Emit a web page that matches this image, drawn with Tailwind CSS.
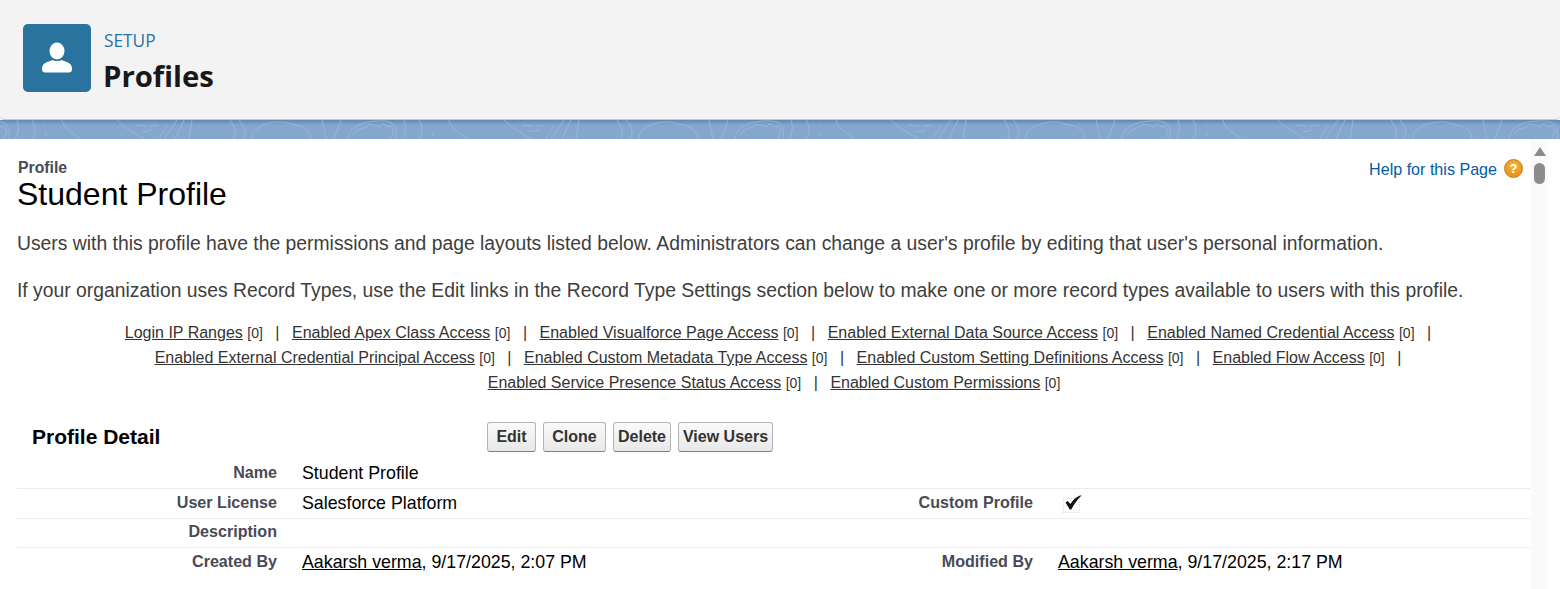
<!DOCTYPE html>
<html><head><meta charset="utf-8"><script src="https://cdn.jsdelivr.net/npm/@tailwindcss/browser@4"></script></head>
<body class="m-0 h-[589px] w-[1560px] overflow-hidden bg-white font-['Liberation_Sans',sans-serif]">
<header class="relative z-10 flex h-[120px] items-start rounded-b-[4px] border-b border-[#c9c9c9] bg-[#f3f3f3] pl-[23px] pt-[24px]">
  <div class="flex h-[68px] w-[68px] items-center justify-center rounded-[5px] bg-[#2a739e]">
    <svg width="32" height="32" viewBox="0 0 32 32" fill="#fff"><ellipse cx="16" cy="9" rx="7.5" ry="8.500"/><path d="M1 27.500c0-1 0-3 1-4.500C4 20.200 8.500 19.500 11.500 18c1.500 1.300 7.500 1.300 9 0 3 1.500 7.500 2.200 9.500 5 1 1.500 1 3.500 1 4.500 0 2-1.500 3-3 3H4c-1.500 0-3-1-3-3z"/></svg>
  </div>
  <div class="ml-[13px] font-['Open_Sans',sans-serif]">
    <div class="mt-[5px] h-[24px] text-[17.300px] leading-[24px] text-[#2574a9]">SETUP</div>
    <h1 class="mt-[4px] -ml-[1px] text-[29.300px] font-bold leading-[38px] text-[#181818]">Profiles</h1>
  </div>
</header>
<div class="relative h-[19px] overflow-hidden bg-[#85a6cf]">
  <div class="absolute inset-x-0 top-0 h-[5px] bg-gradient-to-b from-[#6486b3] to-[#85a6cf]"></div>
  <svg class="absolute inset-0" width="1560" height="19" fill="none" stroke="#a3bddc" stroke-width="1" stroke-opacity=".7">
    <defs><g id="t"><path d="M0 0c8 8 16 12 27 19M18 5l10 1M33 6l8-1M25 12l10-2M50 6l-8 12M60 0l-13 19M67 0l-9 19M75 0l-3 19M113 0c6 9 6 13 4 19M122 0c8 9 7 14 3 19M135 19c0-7 2-8 5-10 5-4 8-5 13-6 5-1 14-2 21 1 9 1 20 5 20 15M205 0l4 19M224 0l-7 19M231 19c1-11 11-17 29-18 15-1 21 3 19 18M236 15c2-4 5-6 10-7 3-1 7-3 5-4 6 1 9 2 12 3l3-4 4 4 4-1 3 5-3 7M287 0c2 6 2 13-2 19M302 0c4 6 4 13 0 19M314 4l2 2M317 11l-2 5M332 0c1 6 5 10 18 18"/></g></defs>
    <use href="#t" x="-270"/><use href="#t" x="117"/><use href="#t" x="504"/><use href="#t" x="891"/><use href="#t" x="1278"/>
  </svg>
</div>
<main class="relative flex h-[450px]">
  <div class="min-w-0 flex-1 pl-[17px]">
    <div class="flex items-start justify-between pr-[7px]">
      <div>
        <div class="ml-[1px] mt-[20px] text-[15.800px] font-bold leading-[18px] text-[#4a4a56]">Profile</div>
        <h2 class="-mt-[1px] text-[32px] leading-[36px] text-black">Student Profile</h2>
      </div>
      <a class="mt-[20px] flex items-center gap-[7px] text-[16.100px] leading-[20px] text-[#015ba7]">Help for this Page
        <span class="mt-[-1px] flex h-[19px] w-[19px] items-center justify-center rounded-full border border-[#c87a0c] bg-[radial-gradient(circle_at_50%_35%,#f8b53a,#e0890f)] text-[13px] font-bold leading-none text-white">?</span>
      </a>
    </div>
    <p class="mt-[20px] text-[19.330px] leading-[24px] text-[#3e3e3c]">Users with this profile have the permissions and page layouts listed below. Administrators can change a user's profile by editing that user's personal information.</p>
    <p class="mt-[23px] text-[19.330px] leading-[24px] text-[#3e3e3c]">If your organization uses Record Types, use the Edit links in the Record Type Settings section below to make one or more record types available to users with this profile.</p>
    <div class="mt-[17px] text-center text-[16px] leading-[25px] text-[#333]">
      <div class="h-[25px] pl-[9px]"><a class="underline">Login IP Ranges</a> <span class="text-[14px]">[0]</span><span class="mx-[12.500px]">|</span><a class="underline">Enabled Apex Class Access</a> <span class="text-[14px]">[0]</span><span class="mx-[12.500px]">|</span><a class="underline">Enabled Visualforce Page Access</a> <span class="text-[14px]">[0]</span><span class="mx-[12.500px]">|</span><a class="underline">Enabled External Data Source Access</a> <span class="text-[14px]">[0]</span><span class="mx-[12.500px]">|</span><a class="underline">Enabled Named Credential Access</a> <span class="text-[14px]">[0]</span><span class="ml-[12.500px]">|</span></div>
      <div class="h-[25px] pl-[9px]"><a class="underline">Enabled External Credential Principal Access</a> <span class="text-[14px]">[0]</span><span class="mx-[12.500px]">|</span><a class="underline">Enabled Custom Metadata Type Access</a> <span class="text-[14px]">[0]</span><span class="mx-[12.500px]">|</span><a class="underline">Enabled Custom Setting Definitions Access</a> <span class="text-[14px]">[0]</span><span class="mx-[12.500px]">|</span><a class="underline">Enabled Flow Access</a> <span class="text-[14px]">[0]</span><span class="ml-[12.500px]">|</span></div>
      <div class="h-[25px] pl-[1px]"><a class="underline">Enabled Service Presence Status Access</a> <span class="text-[14px]">[0]</span><span class="mx-[12.500px]">|</span><a class="underline">Enabled Custom Permissions</a> <span class="text-[14px]">[0]</span></div>
    </div>
    <section class="mt-[25px]">
      <div class="flex h-[33px] items-center">
        <h3 class="w-[470px] pl-[15px] text-[21px] font-bold text-black">Profile Detail</h3>
        <div class="flex gap-[7px] text-[16px] font-bold text-[#333]">
          <button class="h-[30px] w-[49px] rounded-[3px] border border-[#b5b5b5] border-b-[#7f7f7f] bg-gradient-to-b from-[#fafafa] to-[#e8e8e8]">Edit</button>
          <button class="h-[30px] w-[63px] rounded-[3px] border border-[#b5b5b5] border-b-[#7f7f7f] bg-gradient-to-b from-[#fafafa] to-[#e8e8e8]">Clone</button>
          <button class="h-[30px] w-[58px] rounded-[3px] border border-[#b5b5b5] border-b-[#7f7f7f] bg-gradient-to-b from-[#fafafa] to-[#e8e8e8]">Delete</button>
          <button class="h-[30px] w-[95px] rounded-[3px] border border-[#b5b5b5] border-b-[#7f7f7f] bg-gradient-to-b from-[#fafafa] to-[#e8e8e8]">View Users</button>
        </div>
      </div>
      <dl class="mt-[6px] text-[17.800px] text-black">
        <div class="flex h-[30px] items-center border-b border-[#ececec] pb-[1px]">
          <dt class="-mt-[2px] w-[260px] text-right text-[16.100px] font-bold leading-[20px] text-[#4a4a56]">Name</dt>
          <dd class="ml-[25px]">Student Profile</dd>
        </div>
        <div class="flex h-[30px] items-center border-b border-[#ececec] pb-[1px]">
          <dt class="-mt-[2px] w-[260px] text-right text-[16.100px] font-bold leading-[20px] text-[#4a4a56]">User License</dt>
          <dd class="ml-[25px] w-[455px]">Salesforce Platform</dd>
          <dt class="-mt-[2px] w-[276px] text-right text-[16.100px] font-bold leading-[20px] text-[#4a4a56]">Custom Profile</dt>
          <dd class="relative ml-[30px] mt-[5px] h-[15px] w-[17px] border border-dotted border-[#dcdcdc]">
            <svg class="absolute -left-[1px] -top-[7px] overflow-visible" width="20" height="20" viewBox="0 0 20 20"><path d="M2.500 10.500 4.800 9 7.300 12C10 8 13 5 17 3.500L18.500 3.500C14 8 11 12 8.300 17.500H6.800z" fill="#111"/></svg>
          </dd>
        </div>
        <div class="flex h-[29px] items-center border-b border-[#ececec] pb-[1px]">
          <dt class="-mt-[4px] w-[260px] text-right text-[16.100px] font-bold leading-[20px] text-[#4a4a56]">Description</dt>
        </div>
        <div class="flex h-[30px] items-center pb-[1px]">
          <dt class="-mt-[4px] w-[260px] text-right text-[16.100px] font-bold leading-[20px] text-[#4a4a56]">Created By</dt>
          <dd class="ml-[25px] w-[455px]"><a class="underline">Aakarsh verma</a>, 9/17/2025, 2:07 PM</dd>
          <dt class="-mt-[4px] w-[276px] text-right text-[16.100px] font-bold leading-[20px] text-[#4a4a56]">Modified By</dt>
          <dd class="ml-[25px]"><a class="underline">Aakarsh verma</a>, 9/17/2025, 2:17 PM</dd>
        </div>
      </dl>
    </section>
  </div>
  <aside class="ml-[1px] flex w-[17px] flex-col items-center bg-[#fafafa] pt-[8px]">
    <div class="h-0 w-0 border-x-[6px] border-b-[9px] border-x-transparent border-b-[#8c8c8c]"></div>
    <div class="mt-[7px] h-[21px] w-[11px] rounded-full bg-[#8c8c8c]"></div>
  </aside>
  <div class="w-[12px] bg-white"></div>
</main>
</body></html>
